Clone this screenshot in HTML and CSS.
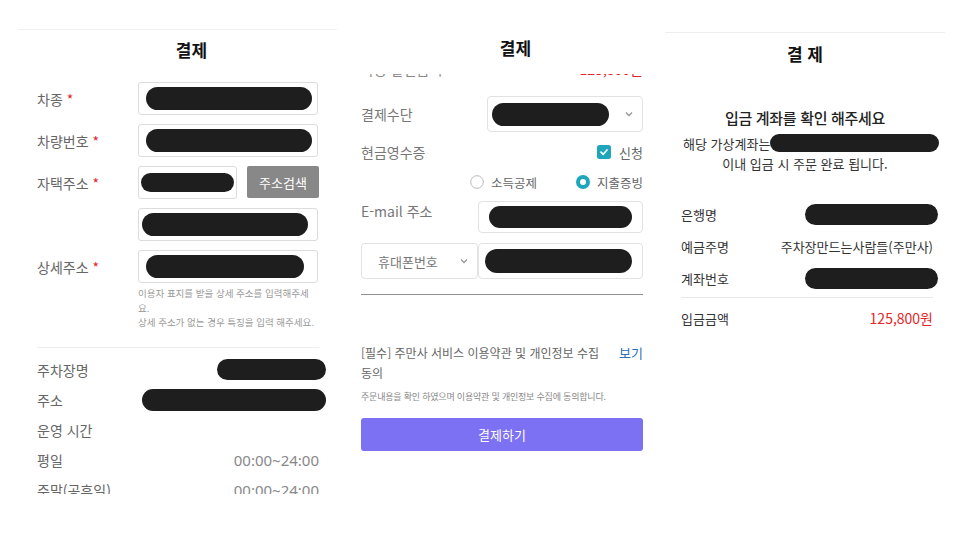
FILE: index.html
```html
<!DOCTYPE html>
<html lang="ko">
<head>
<meta charset="utf-8">
<link rel="stylesheet" href="styles.css">
</head>
<body>
<div class="stage">
  <section class="panel p1">
    <header class="p1-head"><h1 class="title">결제</h1></header>
    <div class="form">
      <div class="frow">
        <span class="flabel">차종 <span class="req">*</span></span>
        <div class="fbox"><span class="blob b1"></span></div>
      </div>
      <div class="frow">
        <span class="flabel">차량번호 <span class="req">*</span></span>
        <div class="fbox"><span class="blob b1"></span></div>
      </div>
      <div class="frow">
        <span class="flabel">자택주소 <span class="req">*</span></span>
        <div class="fsplit">
          <div class="fbox short"><span class="blob b3"></span></div>
          <button class="search">주소검색</button>
        </div>
      </div>
      <div class="frow">
        <span class="flabel"></span>
        <div class="fbox"><span class="blob b4"></span></div>
      </div>
      <div class="frow">
        <span class="flabel">상세주소 <span class="req">*</span></span>
        <div class="fbox"><span class="blob b5"></span></div>
      </div>
      <p class="helper">이용자 표지를 받을 상세 주소를 입력해주세<br>요.<br>상세 주소가 없는 경우 특징을 입력 해주세요.</p>
    </div>
    <div class="info">
      <div class="irow"><span>주차장명</span><span class="blob i1"></span></div>
      <div class="irow"><span>주소</span><span class="blob i2"></span></div>
      <div class="irow"><span>운영 시간</span></div>
      <div class="irow"><span>평일</span><span class="time">00:00~24:00</span></div>
      <div class="irow"><span>주말(공휴일)</span><span class="time">00:00~24:00</span></div>
    </div>
  </section>

  <section class="panel p2">
    <header class="p2-head"><h1 class="title">결제</h1></header>
    <div class="viewport">
      <div class="cutrow"><span>사용 할인금액</span><span class="red">125,800원</span></div>
      <div class="srow">
        <span class="slabel">결제수단</span>
        <div class="sbox select wide">
          <span class="blob s1"></span>
          <svg class="chev" width="8" height="6" viewBox="0 0 8 6"><polyline points="1,1.5 4,4.5 7,1.5" fill="none" stroke="#999" stroke-width="1.4"/></svg>
        </div>
      </div>
      <div class="crow">
        <span class="slabel">현금영수증</span>
        <span class="check">
          <svg width="14" height="14" viewBox="0 0 14 14"><rect width="14" height="14" rx="2.5" fill="#1fa6bd"/><polyline points="4,7.2 6.2,9.3 10,5" fill="none" stroke="#fff" stroke-width="1.7" stroke-linecap="round" stroke-linejoin="round"/></svg>
          신청
        </span>
      </div>
      <div class="rrow">
        <span class="radio"><svg width="14" height="14" viewBox="0 0 14 14"><circle cx="7" cy="7" r="6.3" fill="#fff" stroke="#bbb" stroke-width="1"/></svg>소득공제</span>
        <span class="radio"><svg width="14" height="14" viewBox="0 0 14 14"><circle cx="7" cy="7" r="5" fill="#fff" stroke="#1fa6bd" stroke-width="4"/></svg>지출증빙</span>
      </div>
      <div class="erow">
        <span class="slabel top">E-mail 주소</span>
        <div class="sbox email"><span class="blob e1"></span></div>
      </div>
      <div class="prow">
        <div class="sbox select phone-sel">
          <span class="ptxt">휴대폰번호</span>
          <svg class="chev" width="8" height="6" viewBox="0 0 8 6"><polyline points="1,1.5 4,4.5 7,1.5" fill="none" stroke="#999" stroke-width="1.4"/></svg>
        </div>
        <div class="sbox phone"><span class="blob p1b"></span></div>
      </div>
      <hr class="dark">
      <div class="agree">
        <p class="agree-txt">[필수] 주만사 서비스 이용약관 및 개인정보 수집<br>동의</p>
        <a class="view">보기</a>
      </div>
      <p class="small">주문내용을 확인 하였으며 이용약관 및 개인정보 수집에 동의합니다.</p>
      <button class="pay">결제하기</button>
    </div>
  </section>

  <section class="panel p3">
    <header class="p3-head"><h1 class="title">결 제</h1></header>
    <p class="confirm">입금 계좌를 확인 해주세요</p>
    <div class="vacc"><span>해당 가상계좌는</span><span class="blob v1"></span></div>
    <p class="done">이내 입금 시 주문 완료 됩니다.</p>
    <div class="acc">
      <div class="arow"><span>은행명</span><span class="blob a1"></span></div>
      <div class="arow"><span>예금주명</span><span>주차장만드는사람들(주만사)</span></div>
      <div class="arow"><span>계좌번호</span><span class="blob a1"></span></div>
      <div class="arow total"><span>입금금액</span><span class="red">125,800원</span></div>
    </div>
  </section>
</div>
</body>
</html>
```

FILE: styles.css
```css
* { box-sizing: border-box; }
html, body { margin: 0; padding: 0; background: #fff; }
body {
  font-family: "Noto Sans CJK KR", "Noto Sans", sans-serif;
  color: #333;
  width: 966px;
  height: 543px;
  overflow: hidden;
}
.stage {
  display: flex;
  align-items: flex-start;
}
.panel { flex: none; overflow: hidden; }
.title {
  margin: 0;
  font-size: 17px;
  font-weight: 700;
  color: #111;
  text-align: center;
}
.blob {
  display: block;
  background: #1e1e1e;
  border-radius: 12px;
  flex: none;
}
.red { color: #e3262a; }

/* panel 1 */
.p1 {
  margin-left: 18px;
  margin-top: 29px;
  width: 319px;
  height: 465px;
  border-top: 1px solid #f0f0f0;
}
.p1-head { height: 42px; display: flex; align-items: center; justify-content: center; padding: 0 0 4px 28px; }
.form { padding: 10px 18px 0 19px; display: flex; flex-direction: column; gap: 9px; }
.frow { display: flex; align-items: center; height: 33px; }
.flabel { width: 101px; font-size: 14px; color: #666; flex: none; }
.req { color: #e3262a; }
.fbox {
  width: 180px;
  height: 33px;
  border: 1px solid #dcdcdc;
  border-radius: 3px;
  display: flex;
  align-items: center;
}
.fsplit { display: flex; gap: 10px; width: 181px; }
.fbox.short { width: 99px; }
.search {
  width: 72px;
  height: 32px;
  border: none;
  border-radius: 2px;
  background: #888;
  color: #fff;
  font-family: inherit;
  font-size: 13px;
  padding: 0;
}
.b1 { width: 166px; height: 23px; margin-left: 7px; }
.b3 { width: 93px; height: 19px; margin-left: 2px; }
.b4 { width: 166px; height: 23px; margin-left: 3px; }
.b5 { width: 158px; height: 23px; margin-left: 7px; }
.helper {
  margin: -6px 0 0 101px;
  font-size: 9.5px;
  line-height: 14.5px;
  color: #9a9a9a;
}
.info {
  margin: 17px 18px 0 19px;
  border-top: 1px solid #eee;
  padding-top: 7px;
}
.irow {
  height: 30px;
  display: flex;
  align-items: center;
  justify-content: space-between;
  font-size: 14px;
  color: #666;
}
.time { color: #888; font-family: "Noto Sans", sans-serif; font-size: 15px; }
.i1 { width: 109px; height: 21px; margin-right: -7px; }
.i2 { width: 184px; height: 22px; margin-right: -7px; }

/* panel 2 */
.p2 {
  margin-left: 23px;
  margin-top: 29px;
  width: 283px;
  height: 440px;
}
.p2-head { height: 45px; padding-left: 28px; }
.p2-head .title { line-height: 38px; }
.viewport { height: 395px; overflow: hidden; padding-left: 1px; }
.cutrow {
  margin-top: -16px;
  height: 22px;
  display: flex;
  justify-content: space-between;
  align-items: center;
  font-size: 14px;
  color: #888;
}
.srow { margin-top: 16px; display: flex; justify-content: space-between; align-items: center; }
.slabel { font-size: 14px; color: #777; }
.sbox {
  border: 1px solid #e2e2e2;
  border-radius: 4px;
  display: flex;
  align-items: center;
  background: #fff;
}
.select { justify-content: space-between; padding-right: 9px; }
.wide { width: 156px; height: 36px; }
.s1 { width: 117px; height: 23px; margin-left: 4px; }
.chev { display: block; }
.crow { margin-top: 8px; height: 24px; display: flex; justify-content: space-between; align-items: center; }
.check { display: flex; align-items: center; gap: 8px; font-size: 13px; color: #666; }
.check svg { display: block; }
.rrow {
  margin-top: 6px;
  height: 24px;
  display: flex;
  justify-content: flex-end;
  align-items: center;
  gap: 39px;
  font-size: 12.5px;
  color: #666;
}
.radio { display: flex; align-items: center; gap: 7px; }
.radio svg { display: block; }
.erow { margin-top: 7px; display: flex; justify-content: space-between; align-items: flex-start; }
.slabel.top { line-height: 20px; }
.email { width: 165px; height: 32px; }
.e1 { width: 143px; height: 22px; margin-left: 10px; }
.prow { margin-top: 10px; display: flex; }
.phone-sel { width: 117px; height: 36px; padding-left: 16px; }
.ptxt { font-size: 13px; color: #777; }
.phone { width: 165px; height: 36px; margin-left: 0; }
.p1b { width: 147px; height: 24px; margin-left: 6px; }
hr.dark { margin: 15px 0 0; border: none; border-top: 1.5px solid #8f8f8f; }
.agree { margin-top: 48px; display: flex; justify-content: space-between; align-items: flex-start; }
.agree-txt { margin: 0; font-size: 12px; line-height: 20px; color: #666; }
.view { font-size: 13px; line-height: 20px; color: #2c6eb5; font-weight: 400; }
.small { margin: 7px 0 0; font-size: 9px; line-height: 14px; color: #888; letter-spacing: -0.2px; }
.pay {
  margin-top: 14px;
  width: 282px;
  height: 33px;
  border: none;
  border-radius: 3px;
  background: #7c70f3;
  color: #fff;
  font-family: inherit;
  font-size: 13px;
  padding: 0;
  display: block;
}

/* panel 3 */
.p3 {
  margin-left: 22px;
  margin-top: 32px;
  width: 280px;
  height: 320px;
  border-top: 1px solid #eee;
}
.p3-head { height: 46px; }
.p3-head .title { line-height: 42px; }
.confirm { margin: 27px 0 0; text-align: center; font-size: 15px; line-height: 24px; font-weight: 500; color: #222; letter-spacing: -0.3px; }
.vacc { margin-top: 2px; padding-left: 18px; height: 22px; display: flex; align-items: center; font-size: 13px; color: #333; }
.v1 { width: 169px; height: 18px; }
.done { margin: 0; text-align: center; font-size: 13px; line-height: 20px; color: #333; }
.acc { margin: 24px 12px 0 16px; }
.arow {
  height: 32px;
  display: flex;
  justify-content: space-between;
  align-items: center;
  font-size: 13px;
  color: #333;
}
.a1 { width: 133px; height: 21px; margin-right: -5px; }
.arow.total { margin-top: 3px; padding-top: 4px; height: 37px; border-top: 1px solid #e6e6e6; }
.arow.total .red { font-size: 14px; }
```
